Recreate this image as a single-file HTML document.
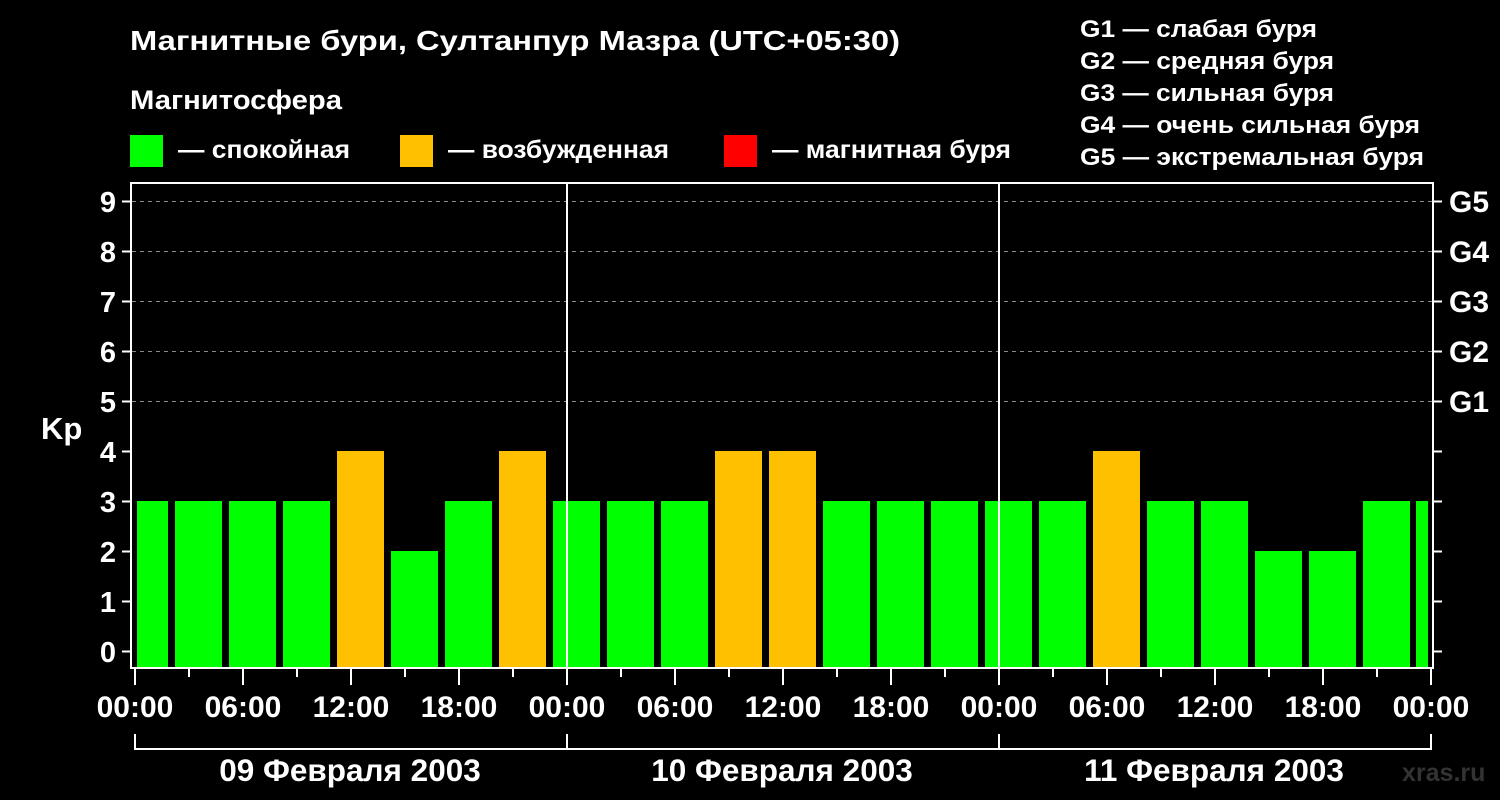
<!DOCTYPE html>
<html><head><meta charset="utf-8"><style>html,body{margin:0;padding:0;background:#000;width:1500px;height:800px;overflow:hidden}</style></head><body>
<svg width="1500" height="800" xmlns="http://www.w3.org/2000/svg" font-family="Liberation Sans, DejaVu Sans, sans-serif" font-weight="bold" fill="#fff">
<rect width="1500" height="800" fill="#000"/>
<text x="130" y="50" font-size="28" textLength="770" lengthAdjust="spacingAndGlyphs">Магнитные бури, Султанпур Мазра (UTC+05:30)</text>
<text x="130" y="109" font-size="27" textLength="212" lengthAdjust="spacingAndGlyphs">Магнитосфера</text>
<rect x="130" y="135" width="33" height="32" fill="#00ff00"/>
<text x="178" y="158" font-size="25" textLength="172" lengthAdjust="spacingAndGlyphs">— спокойная</text>
<rect x="400" y="135" width="33" height="32" fill="#ffc000"/>
<text x="448" y="158" font-size="25" textLength="221" lengthAdjust="spacingAndGlyphs">— возбужденная</text>
<rect x="724" y="135" width="33" height="32" fill="#ff0000"/>
<text x="772" y="158" font-size="25" textLength="239" lengthAdjust="spacingAndGlyphs">— магнитная буря</text>
<g font-size="24.5">
<text x="1080" y="37" textLength="237" lengthAdjust="spacingAndGlyphs">G1 — слабая буря</text>
<text x="1080" y="69" textLength="254" lengthAdjust="spacingAndGlyphs">G2 — средняя буря</text>
<text x="1080" y="101" textLength="254" lengthAdjust="spacingAndGlyphs">G3 — сильная буря</text>
<text x="1080" y="133" textLength="340" lengthAdjust="spacingAndGlyphs">G4 — очень сильная буря</text>
<text x="1080" y="165" textLength="344" lengthAdjust="spacingAndGlyphs">G5 — экстремальная буря</text>
</g>
<g stroke="#888" stroke-width="1" stroke-dasharray="4,4">
<line x1="132" x2="1432" y1="201.5" y2="201.5"/><line x1="132" x2="1432" y1="251.5" y2="251.5"/>
<line x1="132" x2="1432" y1="301.5" y2="301.5"/><line x1="132" x2="1432" y1="351.5" y2="351.5"/>
<line x1="132" x2="1432" y1="401.5" y2="401.5"/>
</g>
<g>
<rect x="137" y="501" width="31" height="166" fill="#00ff00"/>
<rect x="175" y="501" width="47" height="166" fill="#00ff00"/>
<rect x="229" y="501" width="47" height="166" fill="#00ff00"/>
<rect x="283" y="501" width="47" height="166" fill="#00ff00"/>
<rect x="337" y="451" width="47" height="216" fill="#ffc000"/>
<rect x="391" y="551" width="47" height="116" fill="#00ff00"/>
<rect x="445" y="501" width="47" height="166" fill="#00ff00"/>
<rect x="499" y="451" width="47" height="216" fill="#ffc000"/>
<rect x="553" y="501" width="47" height="166" fill="#00ff00"/>
<rect x="607" y="501" width="47" height="166" fill="#00ff00"/>
<rect x="661" y="501" width="47" height="166" fill="#00ff00"/>
<rect x="715" y="451" width="47" height="216" fill="#ffc000"/>
<rect x="769" y="451" width="47" height="216" fill="#ffc000"/>
<rect x="823" y="501" width="47" height="166" fill="#00ff00"/>
<rect x="877" y="501" width="47" height="166" fill="#00ff00"/>
<rect x="931" y="501" width="47" height="166" fill="#00ff00"/>
<rect x="985" y="501" width="47" height="166" fill="#00ff00"/>
<rect x="1039" y="501" width="47" height="166" fill="#00ff00"/>
<rect x="1093" y="451" width="47" height="216" fill="#ffc000"/>
<rect x="1147" y="501" width="47" height="166" fill="#00ff00"/>
<rect x="1201" y="501" width="47" height="166" fill="#00ff00"/>
<rect x="1255" y="551" width="47" height="116" fill="#00ff00"/>
<rect x="1309" y="551" width="47" height="116" fill="#00ff00"/>
<rect x="1363" y="501" width="47" height="166" fill="#00ff00"/>
<rect x="1416" y="501" width="12" height="166" fill="#00ff00"/>
</g>
<g stroke="#fff" stroke-width="2" fill="none">
<path d="M131 668 V183 H1433 V668 Z"/>
<line x1="567" y1="183" x2="567" y2="668"/>
<line x1="999" y1="183" x2="999" y2="668"/>
<path d="M122 201.5h9M122 251.5h9M122 301.5h9M122 351.5h9M122 401.5h9M122 451.5h9M122 501.5h9M122 551.5h9M122 601.5h9M122 651.5h9"/>
<path d="M1433 201.5h9M1433 251.5h9M1433 301.5h9M1433 351.5h9M1433 401.5h9M1433 451.5h9M1433 501.5h9M1433 551.5h9M1433 601.5h9M1433 651.5h9"/>
<path d="M135 668v17M243 668v17M351 668v17M459 668v17M567 668v17M675 668v17M783 668v17M891 668v17M999 668v17M1107 668v17M1215 668v17M1323 668v17M1431 668v17"/>
<path d="M189 668v9M297 668v9M405 668v9M513 668v9M621 668v9M729 668v9M837 668v9M945 668v9M1053 668v9M1161 668v9M1269 668v9M1377 668v9"/>
<path d="M135 734v15H1431V734M567 734v15M999 734v15"/>
</g>
<g font-size="29" text-anchor="end">
<text x="116" y="212">9</text><text x="116" y="262">8</text><text x="116" y="312">7</text><text x="116" y="362">6</text><text x="116" y="412">5</text><text x="116" y="462">4</text><text x="116" y="512">3</text><text x="116" y="562">2</text><text x="116" y="612">1</text><text x="116" y="662">0</text>
</g>
<text x="41" y="439" font-size="31">Kp</text>
<g font-size="30">
<text x="1449" y="212">G5</text><text x="1449" y="262">G4</text><text x="1449" y="312">G3</text><text x="1449" y="362">G2</text><text x="1449" y="412">G1</text>
</g>
<g font-size="30" text-anchor="middle">
<text x="135" y="717">00:00</text><text x="243" y="717">06:00</text><text x="351" y="717">12:00</text><text x="459" y="717">18:00</text>
<text x="567" y="717">00:00</text><text x="675" y="717">06:00</text><text x="783" y="717">12:00</text><text x="891" y="717">18:00</text>
<text x="999" y="717">00:00</text><text x="1107" y="717">06:00</text><text x="1215" y="717">12:00</text><text x="1323" y="717">18:00</text>
<text x="1431" y="717">00:00</text>
</g>
<g font-size="31.5" text-anchor="middle">
<text x="350" y="781">09 Февраля 2003</text>
<text x="782" y="781">10 Февраля 2003</text>
<text x="1214" y="781">11 Февраля 2003</text>
</g>
<text x="1402" y="781" font-size="25" fill="#333">xras.ru</text>
</svg>
</body></html>
